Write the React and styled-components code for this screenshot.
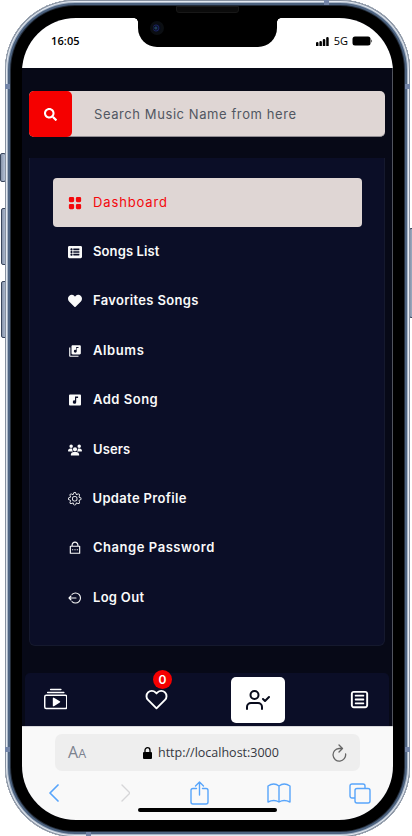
import React from "react";
import styled, { createGlobalStyle } from "styled-components";
import { BsFillGridFill, BsCollectionPlay, BsGear } from "react-icons/bs";
import { FaListAlt, FaHeart, FaSearch } from "react-icons/fa";
import { FaUsers } from "react-icons/fa6";
import { MdLibraryMusic } from "react-icons/md";
import { RiLockPasswordLine } from "react-icons/ri";
import { FiHeart, FiUserCheck } from "react-icons/fi";
import { CgMenuBoxed } from "react-icons/cg";

const GlobalStyle = createGlobalStyle`
  * { box-sizing: border-box; }
  body { margin: 0; background: #fff; overflow: hidden; font-family: Inter, sans-serif; }
  svg { display: block; flex: none; }
`;

const Stage = styled.div`
  position: relative;
  width: 412px;
  height: 836px;
  padding-left: 5px;
  overflow: hidden;
`;

const SideButton = styled.div`
  position: absolute;
  left: ${(p) => p.$x}px;
  top: ${(p) => p.$y}px;
  width: 6px;
  height: ${(p) => p.$h}px;
  border: 1px solid #39465d;
  border-radius: 2px;
  background: linear-gradient(90deg, #8794aa, #b4c1d6);
`;

const Phone = styled.div`
  position: relative;
  width: 405px;
  height: 837px;
  padding: 18px 17px 17px;
  border-radius: 70px;
  background: #000;
  box-shadow:
    inset 0 0 0 1px #8791a0,
    inset 0 0 0 2px #e3e9f1,
    inset 0 0 0 3px #a9b6c7,
    inset 0 0 0 5px #4d6380,
    inset 0 0 0 6px #242d3a;
`;

const Antenna = styled.div`
  position: absolute;
  left: ${(p) => p.$x}px;
  top: ${(p) => p.$y}px;
  width: 5px;
  height: 5px;
  background: #7385a8;
`;

const Screen = styled.div`
  position: relative;
  display: flex;
  flex-direction: column;
  width: 371px;
  height: 802px;
  border-radius: 54px;
  overflow: hidden;
  background: #070917;
`;

const Notch = styled.div`
  position: absolute;
  top: 0;
  left: 116px;
  width: 139px;
  height: 29px;
  border-radius: 0 0 19px 19px;
  background: #000;
`;

const NotchCorner = styled.div`
  position: absolute;
  top: 0;
  left: ${(p) => p.$x}px;
  width: 4px;
  height: 4px;
  background: radial-gradient(circle at ${(p) => p.$side} 100%, transparent 3.5px, #000 4px);
`;

const Camera = styled.div`
  position: absolute;
  left: 145px;
  top: 21px;
  width: 14px;
  height: 14px;
  border-radius: 50%;
  border: 3px solid #0b0e12;
  background: radial-gradient(circle at 35% 50%, #1f3e54 0 1px, #080a22 2px, #1b2562 3px, #080c18 4px);
`;

const Speaker = styled.div`
  position: absolute;
  left: 171px;
  top: 6px;
  width: 63px;
  height: 7px;
  border: 1px solid #181818;
  border-radius: 0 0 3px 3px;
  background: #0b0b0b;
`;

const StatusBar = styled.div`
  flex: none;
  display: flex;
  align-items: center;
  height: 50px;
  padding: 0 20px 4px 29px;
  background: #fff;
  color: #000;
  font: 600 11px/14px "Open Sans", sans-serif;
`;

const Clock = styled.span`
  flex: 1;
  letter-spacing: 0.1px;
`;

const Network = styled.span`
  margin: 0 4px 0 5px;
  font-weight: 400;
  font-size: 11px;
`;

const Page = styled.main`
  display: flex;
  flex-direction: column;
  height: 658px;
  padding: 23px 3px 0;
  border-right: 1px solid #51545e;
`;

const SearchBar = styled.label`
  flex: none;
  display: flex;
  align-items: center;
  height: 46px;
  margin: 0 4px;
  border-radius: 5px;
  border-bottom: 1px solid #918d92;
  background: #dfd6d4;
  color: #515762;
`;

const SearchButton = styled.span`
  display: flex;
  align-items: center;
  justify-content: center;
  width: 43px;
  height: 46px;
  margin: 0 22px -1px 0;
  border-radius: 5px;
  background: #f50000;
  color: #fff;
`;

const Text = styled.span`
  font-size: 13px;
  font-weight: ${(p) => p.$weight || 600};
  letter-spacing: ${(p) => p.$track || 0}px;
  line-height: 20px;
  white-space: nowrap;
`;

const Menu = styled.nav`
  flex: none;
  display: flex;
  flex-direction: column;
  height: 488px;
  margin: 21px 4px 27px;
  padding: 20px 22px 20px 23px;
  border: 1px solid #15192e;
  border-top: 0;
  border-radius: 0 0 6px 6px;
  background: #0b0e27;
`;

const MenuRow = styled.a`
  flex: none;
  display: flex;
  align-items: center;
  gap: 11px;
  height: 49.4px;
  padding: 0 0 2px 15px;
  border-radius: 4px;
  background: ${(p) => (p.$active ? "#dfd6d4" : "transparent")};
  color: ${(p) => (p.$active ? "#f4080c" : "#fafafa")};
  svg { position: relative; top: 1px; }
`;

const BottomNav = styled.nav`
  display: flex;
  align-items: center;
  justify-content: space-between;
  height: 53px;
  padding: 0 17px 0 18px;
  border-radius: 5px 5px 0 0;
  background: #0b0e27;
  color: #fff;
`;

const NavItem = styled.span`
  position: relative;
  display: flex;
  align-items: center;
  justify-content: center;
  width: ${(p) => (p.$active ? 54 : 25)}px;
  height: ${(p) => (p.$active ? 46 : 30)}px;
  margin-left: ${(p) => p.$shift || 0}px;
  border-radius: 5px;
  background: ${(p) => (p.$active ? "#fff" : "transparent")};
  color: ${(p) => (p.$active ? "#080b1c" : "#fff")};
`;

const Badge = styled.span`
  position: absolute;
  left: 9px;
  top: -15px;
  width: 19px;
  height: 19px;
  border-radius: 50%;
  background: #f50000;
  font: 600 12px/19px Inter, sans-serif;
  text-align: center;
`;

const Browser = styled.footer`
  position: relative;
  flex: 1;
  padding: 7px 22px 0 33px;
  border-top: 1px solid #d8d8db;
  background: #f9f9f9;
`;

const AddressBar = styled.div`
  display: flex;
  align-items: center;
  width: 305px;
  height: 37px;
  padding: 0 13px 0 13px;
  border-radius: 7px;
  background: #eee;
`;

const TextSize = styled.span`
  width: 75px;
  color: #7c828f;
  font: 400 16px/20px "Open Sans", sans-serif;
  small { font-size: 12.5px; }
`;

const Url = styled.span`
  flex: 1;
  margin-left: 6px;
  color: #35373f;
  font: 400 12.5px/20px "Open Sans", sans-serif;
`;

const Tools = styled.div`
  display: flex;
  align-items: center;
  justify-content: space-between;
  height: 44px;
  margin-left: -7px;
  color: #58a5fb;
`;

const HomeBar = styled.div`
  position: absolute;
  left: 116px;
  top: 81px;
  width: 139px;
  height: 4px;
  border-radius: 2px;
  background: #000;
`;

const MusicBox = () => (
  <svg width="14" height="14" viewBox="0 0 14 14" fill="currentColor">
    <path fillRule="evenodd" d="M2 1.500h10a1 1 0 0 1 1 1v9a1 1 0 0 1-1 1H2a1 1 0 0 1-1-1v-9a1 1 0 0 1 1-1zM7 3.500v4a1.700 1.700 0 1 0 1.200 1.700V5h1.900V3.500z" />
  </svg>
);

const Stroke = ({ w, h, d, color = "currentColor", sw = 1.4 }) => (
  <svg width={w} height={h} viewBox={`0 0 ${w} ${h}`} fill="none" stroke={color} strokeWidth={sw} strokeLinecap="round" strokeLinejoin="round">
    <path d={d} />
  </svg>
);

const items = [
  { label: "Dashboard", icon: <BsFillGridFill size={14} />, active: true, track: 0.87 },
  { label: "Songs List", icon: <FaListAlt size={14} />, track: 0.12 },
  { label: "Favorites Songs", icon: <FaHeart size={14} />, track: 0.32 },
  { label: "Albums", icon: <MdLibraryMusic size={14} />, track: 0.6 },
  { label: "Add Song", icon: <MusicBox />, track: 0.5 },
  { label: "Users", icon: <FaUsers size={14} />, track: 0.1 },
  { label: "Update Profile", icon: <BsGear size={13.5} />, track: 0.34 },
  { label: "Change Password", icon: <RiLockPasswordLine size={14} />, track: 0.54 },
  {
    label: "Log Out",
    icon: <Stroke w={14} h={14} sw={1.1} d="M4 3.400a5 5 0 1 1 0 7.200M8 7H1M3 5L1 7l2 2" />,
    track: 0.3,
  },
];

export default function App() {
  return (
    <Stage>
      <GlobalStyle />
      <SideButton $x={0} $y={153} $h={29} />
      <SideButton $x={1} $y={208} $h={57} />
      <SideButton $x={1} $y={281} $h={57} />
      <SideButton $x={409} $y={228} $h={90} />
      <Phone>
        <Antenna $x={0} $y={84} />
        <Antenna $x={400} $y={84} />
        <Antenna $x={0} $y={747} />
        <Antenna $x={400} $y={747} />
        <Antenna $x={319} $y={0} />
        <Antenna $x={81} $y={832} />
        <Screen>
          <StatusBar>
            <Clock>16:05</Clock>
            <svg width="13" height="9" viewBox="0 0 13 9" fill="#000">
              <path d="M0 6q0-1 1.2-1t1.300 1v3H0zM3.400 5q0-1 1.200-1t1.300 1v4H3.400zM6.800 3q0-1 1.200-1t1.300 1v6H6.800zM10.200 1q0-1 1.200-1t1.300 1v8h-2.500z" />
            </svg>
            <Network>5G</Network>
            <svg width="21" height="10" viewBox="0 0 21 10">
              <rect x=".5" y=".5" width="18" height="9" rx="2.500" />
              <path d="M19.400 3.200q1.500 1.800 0 3.600z" />
            </svg>
          </StatusBar>
          <Page>
            <SearchBar>
              <SearchButton><FaSearch size={13} /></SearchButton>
              <Text $weight={400} $track={0.58}>Search Music Name from here</Text>
            </SearchBar>
            <Menu>
              {items.map((it) => (
                <MenuRow key={it.label} $active={it.active}>
                  {it.icon}
                  <Text $weight={it.active ? 400 : 600} $track={it.track}>{it.label}</Text>
                </MenuRow>
              ))}
            </Menu>
            <BottomNav>
              <NavItem><BsCollectionPlay size={23.5} /></NavItem>
              <NavItem $shift={14}><FiHeart size={23} /><Badge>0</Badge></NavItem>
              <NavItem $active><FiUserCheck size={24} /></NavItem>
              <NavItem><CgMenuBoxed size={23} /></NavItem>
            </BottomNav>
          </Page>
          <Browser>
            <AddressBar>
              <TextSize>A<small>A</small></TextSize>
              <svg width="9" height="12" viewBox="0 0 9 12">
                <rect y="5" width="9" height="7" rx="1" />
                <path d="M2 6V3.200a2.500 2.500 0 0 1 5 0V6" fill="none" stroke="#000" strokeWidth="1.300" />
              </svg>
              <Url>http://localhost:3000</Url>
              <Stroke w={16} h={18} color="#666" sw={1.3} d="M11.500 4.500H8A6.300 6.300 0 1 0 14.600 10M8 1l3.500 3.500L8 8" />
            </AddressBar>
            <Tools>
              <Stroke w={12} h={18} sw={1.7} d="M10 1L2 9l8 8" />
              <Stroke w={12} h={18} color="#d6d6d8" d="M4 1l8 8-8 8" />
              <Stroke w={20} h={24} d="M7.500 7.500H4a2 2 0 0 0-2 2V21a2 2 0 0 0 2 2h13a2 2 0 0 0 2-2V9.500a2 2 0 0 0-2-2h-3.500M10.500 14V1M6.500 5l4-4 4 4" />
              <Stroke w={24} h={20} d="M12 3Q7-1 1 3v16q6-3 11 0 5-3 11 0V3Q17-1 12 3v16" />
              <Stroke w={22} h={21} d="M5.500 15H3a2 2 0 0 1-2-2V3a2 2 0 0 1 2-2h11a2 2 0 0 1 2 2v2.500M8 5.500h11a2 2 0 0 1 2 2V18a2 2 0 0 1-2 2H8a2 2 0 0 1-2-2V7.500a2 2 0 0 1 2-2z" />
            </Tools>
            <HomeBar />
          </Browser>
          <Notch />
          <NotchCorner $x={112} $side="0%" />
          <NotchCorner $x={255} $side="100%" />
        </Screen>
        <Camera />
        <Speaker />
      </Phone>
    </Stage>
  );
}
